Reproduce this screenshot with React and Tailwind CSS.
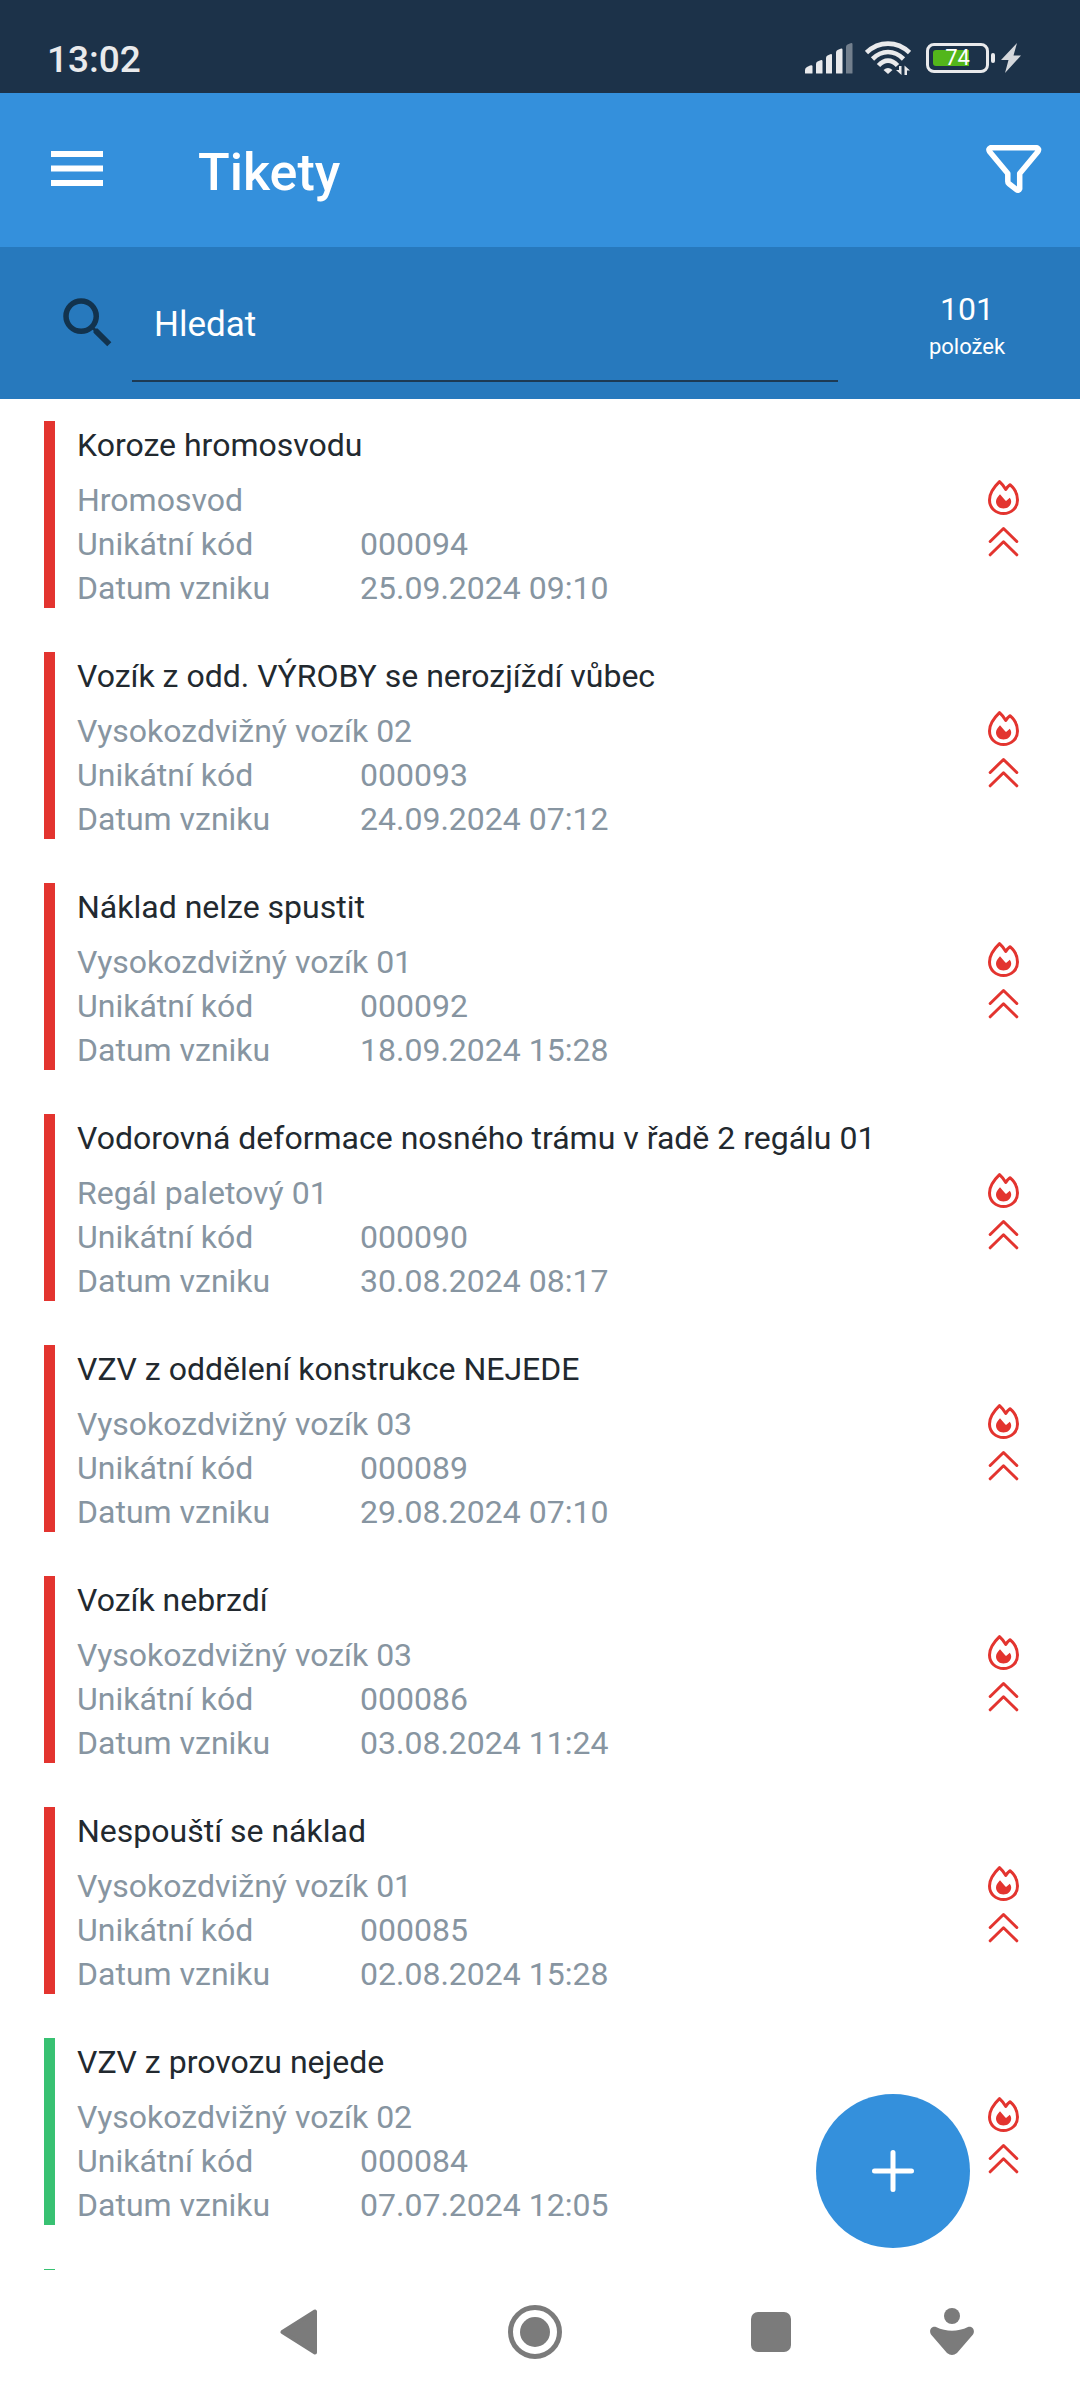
import React, { useState } from "react";

const TICKETS = [
  { code: "000094", title: "Koroze hromosvodu", asset: "Hromosvod", created: "25.09.2024 09:10", status: "open" },
  { code: "000093", title: "Vozík z odd. VÝROBY se nerozjíždí vůbec", asset: "Vysokozdvižný vozík 02", created: "24.09.2024 07:12", status: "open" },
  { code: "000092", title: "Náklad nelze spustit", asset: "Vysokozdvižný vozík 01", created: "18.09.2024 15:28", status: "open" },
  { code: "000090", title: "Vodorovná deformace nosného trámu v řadě 2 regálu 01", asset: "Regál paletový 01", created: "30.08.2024 08:17", status: "open" },
  { code: "000089", title: "VZV z oddělení konstrukce NEJEDE", asset: "Vysokozdvižný vozík 03", created: "29.08.2024 07:10", status: "open" },
  { code: "000086", title: "Vozík nebrzdí", asset: "Vysokozdvižný vozík 03", created: "03.08.2024 11:24", status: "open" },
  { code: "000085", title: "Nespouští se náklad", asset: "Vysokozdvižný vozík 01", created: "02.08.2024 15:28", status: "open" },
  { code: "000084", title: "VZV z provozu nejede", asset: "Vysokozdvižný vozík 02", created: "07.07.2024 12:05", status: "done" },
];

const STATUS_BAR = {
  open: "bg-[#e3342f]",
  done: "bg-[#38c172]",
};

function SignalIcon() {
  return (
    <svg className="w-12 h-8" viewBox="0 0 48 32" fill="#e9eaec">
      <path d="M0 31v-3q0-2 2-3l3-1.500q2.500-1 2.500 1V31q0 .5-.5.5H.5Q0 31.500 0 31z" />
      <path d="M11 31V22q0-2 1.500-2.500l3-1.300q2-.8 2 1V31q0 .5-.5.5h-5.500q-.5 0-.5-.5z" />
      <path d="M21 31V16q0-2 1.500-2.500l2.800-1.300q1.700-.8 1.700 1V31q0 .5-.5.5h-5q-.5 0-.5-.5z" />
      <path d="M31 31V10.500q0-2 1.500-2.500l3-1.300q2-.8 2 1V31q0 .5-.5.5h-5.500q-.5 0-.5-.5z" />
      <path opacity=".42" d="M41 31V5q0-2 1.500-2.500l3-1.300q2-.8 2 1V31q0 .5-.5.5h-5.500q-.5 0-.5-.5z" />
    </svg>
  );
}

function WifiIcon() {
  return (
    <svg className="w-[46px] h-[34px]" viewBox="0 0 46 34" fill="none" stroke="#e9eaec" strokeWidth="4.600">
      <path d="M1.500 11.500Q11 2.600 23 2.600t21.500 8.900" />
      <path d="M7.500 18Q14.500 11 23 11t15.500 7" />
      <path d="M13.500 24.500Q18 19.600 23 19.600t9.500 4.900" />
      <path d="M18.500 29q4.500-4 9 0L23 33z" fill="#e9eaec" stroke="none" />
      <path d="M36.500 25v9l-5.500-5h3v-4zM39.500 34v-9.500l5.500 5h-3V34z" fill="#e9eaec" stroke="none" />
    </svg>
  );
}

function Battery({ level }) {
  return (
    <div className="flex items-center">
      <div className="relative w-[63px] h-[30px] rounded-[8px] border-3 border-[#e9eaec] p-1">
        <div className="h-full rounded-l-[3px] bg-[#53b61b]" style={{ width: `${level}%` }} />
        <span className="absolute inset-0 flex items-center justify-center text-[22px] leading-6 text-white">
          {level}
        </span>
      </div>
      <div className="w-1 h-2.5 ml-0.5 rounded-[2px] bg-[#e9eaec]" />
    </div>
  );
}

function BoltIcon() {
  return (
    <svg className="w-5 h-[30px]" viewBox="0 0 20 30" fill="#d5d8dc">
      <path d="M16 0 0 17h7.500L4 30 20 12.500h-7.500z" />
    </svg>
  );
}

function MenuIcon() {
  return (
    <svg className="w-[52px] h-9" viewBox="0 0 52 36" fill="currentColor">
      <path d="M0 0h52v6H0zM0 14.500h52v6H0zM0 29h52v6H0z" />
    </svg>
  );
}

function FilterIcon() {
  return (
    <svg className="w-14 h-12" viewBox="0 0 56 48" fill="none" stroke="currentColor" strokeWidth="5.500" strokeLinejoin="round">
      <path d="M4.500 2.800h46.500q2.600 1.200 1 3.600L33.700 28.500v15.200q-1 2.500-3 1L22.700 38.500q-.9-.8-.9-2v-8L3.500 6.400q-1.600-2.400 1-3.600z" />
    </svg>
  );
}

function SearchIcon() {
  return (
    <svg className="w-[66px] h-[66px]" viewBox="0 0 24 24" fill="#12334e">
      <path d="M15.500 14h-.79l-.28-.27A6.471 6.471 0 0 0 16 9.500 6.500 6.500 0 1 0 9.500 16c1.610 0 3.090-.59 4.230-1.570l.27.28v.79l5 4.990L20.490 19l-4.990-5zm-6 0C7.010 14 5 11.990 5 9.500S7.010 5 9.500 5 14 7.010 14 9.500 11.990 14 9.500 14z" />
    </svg>
  );
}

function FireIcon() {
  return (
    <svg className="w-[31px] h-[35px]" viewBox="0 0 31 35" fill="none" stroke="#e3342f" strokeWidth="3" strokeLinejoin="round">
      <path d="M11.500 1.700C6.500 6.500 1.500 13.500 1.500 20c0 8 6.300 13.500 14 13.500s14-5.500 14-13.500c0-5.500-3-11.500-7.500-15.300-1.600 1.200-3 2.800-4.200 4.700-1.700-2.900-3.900-5.500-6.300-7.700z" />
      <path d="M12 14.300c-2.500 2.600-4 5-4 7.300 0 4.200 3.300 7 7.500 7s7.700-2.800 7.700-7c0-1.400-.6-2.800-1.400-3.900l-3.400 3q-.6.300-1-.2z" fill="#e3342f" stroke="none" />
    </svg>
  );
}

function ChevronsUpIcon() {
  return (
    <svg className="w-[31px] h-[31px]" viewBox="0 0 31 31" fill="none" stroke="#e3342f" strokeWidth="3" strokeLinecap="round" strokeLinejoin="round">
      <path d="M2.200 15.500 15.500 2.500l13.300 13M2.200 28.800l13.300-13 13.300 13" />
    </svg>
  );
}

function StatusBar() {
  return (
    <div className="shrink-0 h-[93px] pt-[22px] pl-[47px] pr-[59px] flex items-center justify-between bg-[#1c3249] text-[#e9eaec]">
      <span className="pt-1 text-[37px] leading-10 font-medium">13:02</span>
      <div className="flex items-center gap-3">
        <SignalIcon />
        <WifiIcon />
        <div className="flex items-center gap-1.5 pl-[3px]">
          <Battery level={74} />
          <BoltIcon />
        </div>
      </div>
    </div>
  );
}

function TicketRow({ ticket }) {
  return (
    <li className="flex py-[22px] pl-11 pr-[55px]">
      <div className={`w-[11px] shrink-0 ${STATUS_BAR[ticket.status]}`} />
      <div className="flex-1 min-w-0 pl-[22px] text-[32px] leading-10 text-[#8795a1]">
        <h2 className="pt-1 mb-[11px] truncate text-[#22292f]">{ticket.title}</h2>
        <p className="pt-1 truncate">{ticket.asset}</p>
        <dl className="grid grid-cols-[283px_1fr]">
          <dt className="pt-1">Unikátní kód</dt>
          <dd className="pt-1">{ticket.code}</dd>
          <dt className="pt-1">Datum vzniku</dt>
          <dd className="pt-1">{ticket.created}</dd>
        </dl>
      </div>
      <div className="w-11 shrink-0 pt-[54px]">
        <div className="h-11 flex items-center justify-center"><FireIcon /></div>
        <div className="h-11 flex items-center justify-center"><ChevronsUpIcon /></div>
      </div>
    </li>
  );
}

function NavBar() {
  return (
    <nav className="shrink-0 h-[130px] pl-[181px] pr-[65px] pb-1.5 grid grid-cols-[236fr_236fr_236fr_126fr] items-center justify-items-center bg-white text-[#7b7b7b]">
      <button type="button" aria-label="Zpět">
        <svg className="w-[38px] h-[46px]" viewBox="0 0 38 46" fill="currentColor" stroke="currentColor" strokeWidth="4" strokeLinejoin="round">
          <path d="M35 2.500v41L2.500 23z" />
        </svg>
      </button>
      <button type="button" aria-label="Domů">
        <svg className="w-[54px] h-[54px]" viewBox="0 0 54 54">
          <circle cx="27" cy="27" r="24.500" fill="none" stroke="currentColor" strokeWidth="5" />
          <circle cx="27" cy="27" r="15" fill="currentColor" />
        </svg>
      </button>
      <button type="button" aria-label="Aplikace">
        <div className="w-10 h-10 rounded-[7px] bg-current" />
      </button>
      <button type="button" aria-label="Usnadnění">
        <svg className="w-11 h-12" viewBox="0 0 44 48" fill="currentColor">
          <circle cx="22" cy="8" r="8" />
          <path d="M6 18.900q16 7.600 32 0c4.500-1 7.500 3.500 5 7.500L27 45q-5 4-10 0L1 26.400c-2.500-4 .5-8.500 5-7.500z" />
        </svg>
      </button>
    </nav>
  );
}

export default function App() {
  const [query, setQuery] = useState("");

  return (
    <div className="h-screen flex flex-col overflow-hidden bg-white font-['Roboto',sans-serif]">
      <StatusBar />

      <header className="shrink-0 h-[154px] pb-0.5 pl-[51px] pr-[38px] flex items-center bg-[#3490dc] text-white">
        <button type="button" aria-label="Menu"><MenuIcon /></button>
        <h1 className="flex-1 pl-[95px] pt-2 text-[52px] leading-[60px] font-medium">Tikety</h1>
        <button type="button" aria-label="Filtr"><FilterIcon /></button>
      </header>

      <div className="shrink-0 h-[152px] pl-[55px] flex items-center bg-[#2779bd] text-white">
        <label htmlFor="search" aria-label="Hledat"><SearchIcon /></label>
        <input
          id="search"
          type="text"
          value={query}
          onChange={(e) => setQuery(e.target.value)}
          placeholder="Hledat"
          className="flex-1 min-w-0 self-end h-[114px] mb-[17px] ml-[11px] pl-[22px] border-b-2 border-[#1d3a54] text-[35px] outline-none placeholder:text-white placeholder:opacity-100"
        />
        <div className="w-[226px] ml-4 pt-1 text-center">
          <div className="text-[32px] leading-10">101</div>
          <div className="mt-1 text-[22px] leading-7">položek</div>
        </div>
      </div>

      <main className="relative flex-1 min-h-0">
        <ul className="h-full overflow-hidden">
          {TICKETS.map(ticket => (
            <TicketRow key={ticket.code} ticket={ticket} />
          ))}
          {/* next row just peeks in above the nav bar */}
          <li className="pt-[22px] pl-11">
            <div className={`w-[11px] h-[187px] ${STATUS_BAR.done}`} />
          </li>
        </ul>
        <button
          type="button"
          aria-label="Nový tiket"
          className="absolute right-[110px] bottom-[22px] w-[154px] h-[154px] rounded-full flex items-center justify-center bg-[#3490dc] text-white"
        >
          <svg className="w-11 h-11" viewBox="0 0 44 44" fill="none" stroke="currentColor" strokeWidth="5" strokeLinecap="round">
            <path d="M22 3.500v37M3.500 22h37" />
          </svg>
        </button>
      </main>

      <NavBar />
    </div>
  );
}
